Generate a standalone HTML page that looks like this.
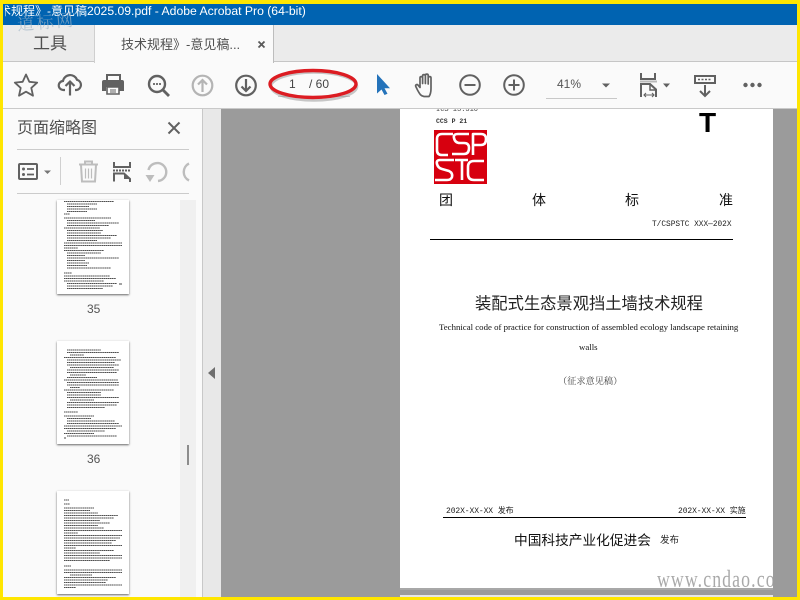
<!DOCTYPE html>
<html lang="zh"><head><meta charset="utf-8"><title>Acrobat</title>
<style>
html,body{margin:0;padding:0}
body{width:800px;height:600px;overflow:hidden;position:relative;background:#ffe600;font-family:"Liberation Sans","Noto Sans CJK SC",sans-serif}
div,span,svg{position:absolute;display:block}
.t{white-space:nowrap;line-height:1}
.cn{font-family:"Liberation Sans","Noto Sans CJK SC",sans-serif}
.m{font-family:"Liberation Mono","Noto Sans CJK SC",monospace}
</style></head><body>
<!-- app frame -->
<div style="left:3px;top:4px;width:794px;height:593px;background:#fafafa;overflow:hidden">
<div style="left:0;top:0;width:794px;height:21px;background:#0063b1"></div>
<div style="left:0;top:21px;width:794px;height:36px;background:#ebebeb;border-bottom:1px solid #c6c6c6"></div>
<div style="left:91px;top:21px;width:180px;height:38px;background:#fafafa;border-left:1px solid #cfcfcf;border-right:1px solid #bdbdbd;box-sizing:border-box"></div>
<div class="t" style="left:30px;top:31px;font-size:17px;color:#505050">工具</div>
<div class="t" style="left:118px;top:34px;font-size:13px;color:#505050">技术规程》-意见稿...</div>
<svg style="left:254px;top:36px" width="9" height="9" viewBox="0 0 9 9"><path d="M1.500 1.500L7.500 7.500M7.500 1.500L1.500 7.500" stroke="#5a5a5a" stroke-width="1.800"/></svg>
<div style="left:0;top:104px;width:794px;height:1px;background:#c9c9c9"></div>
<!-- left panel bits -->
<div style="left:199px;top:105px;width:1px;height:488px;background:#c8c8c8"></div>
<div style="left:200px;top:105px;width:18px;height:488px;background:#e8e8e8"></div>
<div style="left:218px;top:105px;width:576px;height:488px;background:#9b9b9b"></div>
<svg style="left:205px;top:363px" width="8" height="12" viewBox="0 0 8 12"><path d="M7 0V12L0 6Z" fill="#6e6e6e"/></svg>
<div style="left:177px;top:196px;width:16px;height:397px;background:#f0f0f0"></div>
<div style="left:184px;top:441px;width:2px;height:20px;background:#8c8c8c"></div>
<!-- page -->
<div style="left:397px;top:105px;width:373px;height:479px;background:#fff;overflow:hidden"></div>
<div style="left:397px;top:584px;width:373px;height:2px;background:#a8a8a8"></div>
<div style="left:397px;top:591px;width:373px;height:2px;background:#e6e6e6"></div>
</div>

<!-- title bar text -->
<div class="t" style="left:5px;top:5px;width:82px;height:15px;overflow:hidden;color:#fff;font-size:12px;line-height:13px"><span style="position:absolute;right:0;top:0;white-space:nowrap">术规程》-意见稿</span></div>
<div class="t" style="left:87px;top:5px;color:#fff;font-size:12.200px;line-height:13px">2025.09.pdf - Adobe Acrobat Pro (64-bit)</div>

<!-- watermark -->
<div class="t" style="left:17px;top:12px;font-size:17px;font-family:'Noto Serif CJK SC',serif;color:#9fb4c6;opacity:.65;letter-spacing:2.500px;transform:rotate(-5deg)">道标网</div>

<!-- toolbar icons -->
<svg style="left:0;top:62px" width="800" height="46" viewBox="0 62 800 46" fill="none">
 <path d="M26 74.500l3.300 7.300 7.900.8-5.900 5.300 1.700 7.800-7-4-7 4 1.700-7.800-5.900-5.300 7.900-.8z" stroke="#616161" stroke-width="1.800" stroke-linejoin="round"/>
 <path d="M65 90h-1.500a4.300 4.300 0 0 1-.5-9 7.300 7.300 0 0 1 14-1.200A5.200 5.200 0 0 1 76.500 90H75" stroke="#616161" stroke-width="2.200"/>
 <path d="M70 95.500V82M65.500 86l4.500-4.500 4.500 4.500" stroke="#616161" stroke-width="2.200"/>
 <path d="M107 80v-5h13v5" stroke="#616161" stroke-width="2"/>
 <path d="M104 80h18a2 2 0 0 1 2 2v9h-5v-4h-13v4h-4v-9a2 2 0 0 1 2-2z" fill="#616161"/>
 <path d="M107 87h12v7h-12z" fill="#fafafa" stroke="#616161" stroke-width="1.600"/>
 <path d="M110 90h6M110 92h6" stroke="#616161" stroke-width="1"/>
 <circle cx="157" cy="84" r="8" stroke="#616161" stroke-width="2.400"/>
 <path d="M163 90l6 6" stroke="#616161" stroke-width="2.800"/>
 <path d="M153 84h2M156 84h2M159 84h2" stroke="#616161" stroke-width="1.800"/>
 <circle cx="202.500" cy="85.500" r="9.800" stroke="#b4b4b4" stroke-width="2.200"/>
 <path d="M202.500 92V80M198 84.500l4.500-4.500 4.500 4.500" stroke="#b4b4b4" stroke-width="2.200"/>
 <circle cx="246" cy="85.500" r="9.800" stroke="#616161" stroke-width="2.200"/>
 <path d="M246 79v12M241.500 86.500l4.500 4.500 4.500-4.500" stroke="#616161" stroke-width="2.200"/>
 <path d="M377 74v19.500l4.500-4 3 5.500 3-1.300-3-5.500h5.500z" fill="#2473ba"/>
 <path d="M424 96.500c-3.500-.5-4.500-3-6.500-6.500l-1.700-3.500c-.7-1.500 1.200-2.700 2.300-1.300l1.900 2.300V78c0-1.800 2.600-1.800 2.600 0v5.500V76c0-1.800 2.800-1.800 2.800 0v7.500V75.500c0-1.800 2.800-1.800 2.800 0V84v-6c0-1.800 2.800-1.800 2.800 0v10.500c0 4-.6 6-2 8z" fill="#fafafa" stroke="#616161" stroke-width="1.700" stroke-linejoin="round"/>
 <circle cx="470" cy="85" r="9.800" stroke="#616161" stroke-width="2"/>
 <path d="M464.500 85h11" stroke="#616161" stroke-width="2"/>
 <circle cx="514" cy="85" r="9.800" stroke="#616161" stroke-width="2"/>
 <path d="M508.500 85h11M514 79.500v11" stroke="#616161" stroke-width="2"/>
 <path d="M546 98.500h71" stroke="#c8c8c8"/>
 <path d="M602 83.500h8l-4 4z" fill="#616161"/>
 <path d="M641 73v6h14v-6" stroke="#616161" stroke-width="2"/>
 <path d="M640 81.500h17" stroke="#b9b9b9" stroke-width="2"/>
 <path d="M641 97v-13h9l6 5.500V97" stroke="#616161" stroke-width="2"/>
 <path d="M650 84v6h6" stroke="#616161" stroke-width="1.500"/>
 <path d="M644 95h10M646 93l-2 2 2 2M652 93l2 2-2 2" stroke="#616161" stroke-width="1.100"/>
 <path d="M663 83.500h7l-3.500 4z" fill="#616161"/>
 <rect x="695" y="76" width="20" height="7" stroke="#616161" stroke-width="2"/>
 <path d="M698 79.500h2M701.500 79.500h2M705 79.500h2M708.500 79.500h2" stroke="#616161" stroke-width="1.600"/>
 <path d="M705 85v10.500M700 91l5 5 5-5" stroke="#616161" stroke-width="2"/>
 <circle cx="745.500" cy="85" r="2.200" fill="#616161"/><circle cx="752.500" cy="85" r="2.200" fill="#616161"/><circle cx="759.500" cy="85" r="2.200" fill="#616161"/>
</svg>
<!-- page box with ellipse -->
<div style="left:278px;top:96px;width:72px;height:1px;background:#c8c8c8"></div>
<div class="t" style="left:289px;top:78px;font-size:12px;color:#444">1</div>
<div class="t" style="left:309px;top:78px;font-size:12px;color:#444">/ 60</div>
<svg style="left:262px;top:62px" width="105" height="42" viewBox="0 0 105 42" fill="none">
 <ellipse cx="52" cy="24.500" rx="43" ry="14" stroke="#888" stroke-width="2.600" opacity=".45"/>
 <ellipse cx="51" cy="22" rx="43" ry="13.500" stroke="#dc1c22" stroke-width="3.400"/>
</svg>
<div class="t" style="left:557px;top:78px;font-size:12px;color:#555">41%</div>

<!-- left panel -->
<div class="t" style="left:17px;top:121px;font-size:16px;color:#505050">页面缩略图</div>
<svg style="left:167px;top:121px" width="14" height="14" viewBox="0 0 14 14"><path d="M1.500 1.500l11 11M12.500 1.500l-11 11" stroke="#616161" stroke-width="2"/></svg>
<div style="left:17px;top:149px;width:172px;height:1px;background:#cbcbcb"></div>
<div style="left:17px;top:193px;width:172px;height:1px;background:#cbcbcb"></div>
<div style="left:60px;top:157px;width:1px;height:28px;background:#d0d0d0"></div>
<svg style="left:0;top:150px;width:190px" width="190" height="43" viewBox="0 150 190 43" fill="none">
 <rect x="19" y="164" width="18" height="15" rx="1" stroke="#616161" stroke-width="2"/>
 <circle cx="23.500" cy="169" r="1.500" fill="#616161"/><circle cx="23.500" cy="174.500" r="1.500" fill="#616161"/>
 <path d="M27 169h7M27 174.500h7" stroke="#616161" stroke-width="1.800"/>
 <path d="M44 170.500h7l-3.500 3.500z" fill="#767676"/>
 <path d="M79 164.500h19M85 164v-2.500h7v2.500" stroke="#bdbdbd" stroke-width="2"/>
 <path d="M81 165l1 16.500h13l1-16.500" stroke="#bdbdbd" stroke-width="2"/>
 <path d="M85.500 168.500v10M88.500 168.500v10M91.500 168.500v10" stroke="#bdbdbd" stroke-width="1.200"/>
 <path d="M114 162v5h16v-5" stroke="#616161" stroke-width="2"/>
 <path d="M113 170.500h17.500" stroke="#616161" stroke-width="2" stroke-dasharray="2 1"/>
 <path d="M114 181.500v-8h10l6 5.500v3" stroke="#616161" stroke-width="2"/>
 <path d="M124 174v5h6z" fill="#616161"/>
 <path d="M148.500 170a9 9 0 1 1 9.500 11" stroke="#bdbdbd" stroke-width="2.400"/>
 <path d="M145.500 175h9l-4.500 7z" fill="#bdbdbd"/>
 <path d="M189 163.500a9.500 9.500 0 0 0 0 17" stroke="#bdbdbd" stroke-width="2.400"/>
</svg>

<!-- thumbnails -->
<div style="left:57px;top:200px;width:72px;height:94px;background:#fff;box-shadow:0 1px 2px #666"></div>
<svg style="left:57px;top:200px" width="72" height="94" viewBox="0 0 72 94" fill="none" stroke="#222" stroke-width=".9" stroke-dasharray="1.500 .4" opacity=".8">
<path d="M7 1.500h50M10 4h30M10 6.500h22M10 9h30M10 11.500h20M7 14h6M7 18h47M10 20.500h28M10 23h52M10 25.500h42M7 28h36M10 30.500h36M10 33h34M10 35.500h50M10 38h44M10 40.500h30M7 43h58M7 45.500h58M7 48h14M7 50.500h40M10 53h34M10 55.500h18M10 58h52M10 60.500h18M10 63h22M10 65.500h20M10 68h44M7 73h8M7 76h46M7 78.500h52M7 81h40M10 83.500h50M10 86h46M10 88.500h36"/>
<path d="M62 84h3" stroke="#000" stroke-dasharray="none"/></svg>
<div class="t" style="left:87px;top:303px;font-size:12px;color:#555">35</div>

<div style="left:57px;top:341px;width:72px;height:103px;background:#fff;box-shadow:0 1px 2px #666"></div>
<svg style="left:57px;top:341px" width="72" height="103" viewBox="0 0 72 103" fill="none" stroke="#222" stroke-width=".9" stroke-dasharray="1.500 .4" opacity=".8">
<path d="M10 9h34M10 11.500h52M13 14h14M7 16.500h52M10 19h54M10 21.500h48M10 24h52M13 26.500h44M10 29h52M10 31.500h50M13 34h16M10 36.500h30M7 39h54M10 41.500h52M10 44h52M13 46.500h10M7 49h50M10 51.500h34M10 54h34M10 56.500h52M13 59h24M10 61.500h52M10 64h50M10 66.500h38M7 71h14M7 75h30M10 77.500h24M10 80h48M10 82.500h52M7 85h58M7 87.500h52M10 90h38M7 92.500h30M10 95h50"/>
<path d="M7 97h2" stroke="#000" stroke-dasharray="none"/></svg>
<div class="t" style="left:87px;top:453px;font-size:12px;color:#555">36</div>

<div style="left:57px;top:491px;width:72px;height:103px;background:#fff;box-shadow:0 1px 2px #666"></div>
<svg style="left:57px;top:491px" width="72" height="103" viewBox="0 0 72 103" fill="none" stroke="#222" stroke-width=".9" stroke-dasharray="1.500 .4" opacity=".8">
<path d="M7 9h5M7 13h6M7 17h30M7 19.500h26M7 22h34M7 24.500h54M7 27h50M7 29.500h36M7 32h46M7 34.500h34M7 37h40M7 39.500h58M7 42h14M7 44.500h58M7 47h56M7 49.500h52M7 52h48M7 54.500h58M7 57h12M7 59.500h50M7 62h36M7 64.500h58M7 67h58M7 69.500h46M7 75h7M7 79h58M7 81.500h58M13 84h22M7 86.500h52M7 89h44M7 91.500h42M7 94h58M7 96.500h12"/>
</svg>

<!-- PDF page content -->
<div class="t m" style="left:436px;top:109px;font-size:7px;color:#444;height:3px;overflow:hidden;line-height:3px"><span style="position:static;display:inline">ICS 13.310</span></div>
<div class="t m" style="left:436px;top:119px;font-size:6.500px;color:#333;font-weight:bold">CCS P 21</div>
<div class="t" style="left:699px;top:109px;font-size:28px;font-weight:bold;color:#000">T</div>
<svg style="left:434px;top:130px" width="53" height="54" viewBox="0 0 53 54" fill="none" stroke="#fff" stroke-width="2.600" stroke-linejoin="round">
 <rect width="53" height="54" fill="#d7000f" stroke="none"/>
 <path d="M19 4H8Q3 4 3 9V20Q3 25 8 25H14"/>
 <path d="M35 4H24Q19 4 20 8Q21 13 26 13H30Q35 13 35 18Q35 24 30 24H18"/>
 <path d="M39 25V4H47Q52 4 52 9Q52 15 47 15H39"/>
 <path d="M20 30H6Q2 30 3 34Q4 38 8 39L15 41Q19 43 18 47Q17 50 13 50H1"/>
 <path d="M21 30H34M28 30V50"/>
 <path d="M50 31H40Q34 31 34 37V44Q34 50 40 50H50"/>
</svg>
<div class="t cn" style="left:439px;top:193px;font-size:14px;color:#111">团</div>
<div class="t cn" style="left:532px;top:193px;font-size:14px;color:#111">体</div>
<div class="t cn" style="left:625px;top:193px;font-size:14px;color:#111">标</div>
<div class="t cn" style="left:719px;top:193px;font-size:14px;color:#111">准</div>
<div class="t m" style="left:652px;top:222px;font-size:7.800px;color:#222">T/CSPSTC XXX—202X</div>
<div style="left:430px;top:239px;width:303px;height:1px;background:#000"></div>
<div class="t cn" style="left:475px;top:296px;font-size:16.300px;color:#222">装配式生态景观挡土墙技术规程</div>
<div class="t" style="left:439px;top:323px;font-size:8.800px;color:#111;font-family:'Liberation Serif',serif">Technical code of practice for construction of assembled ecology landscape retaining</div>
<div class="t" style="left:579px;top:343px;font-size:8.800px;color:#111;font-family:'Liberation Serif',serif">walls</div>
<div class="t" style="left:558px;top:376px;font-size:9.200px;color:#444;font-family:'Noto Serif CJK SC',serif">（征求意见稿）</div>
<div class="t m" style="left:446px;top:508px;font-size:8px;color:#222;letter-spacing:-.1px">202X-XX-XX 发布</div>
<div class="t m" style="left:678px;top:508px;font-size:8px;color:#222;letter-spacing:-.1px">202X-XX-XX 实施</div>
<div style="left:443px;top:517px;width:303px;height:1px;background:#000"></div>
<div class="t cn" style="left:514px;top:534px;font-size:13.700px;color:#111">中国科技产业化促进会</div>
<div class="t cn" style="left:660px;top:536px;font-size:9.500px;color:#222">发布</div>
<!-- watermark -->
<div style="left:640px;top:565px;width:133px;height:25px;overflow:hidden"><div class="t" style="left:17px;top:3px;font-size:24px;color:#a0a0a0;font-family:'Liberation Serif',serif;letter-spacing:1.500px;transform:scaleX(.74);transform-origin:0 0;opacity:.9">www.cndao.com</div></div>
</body></html>
